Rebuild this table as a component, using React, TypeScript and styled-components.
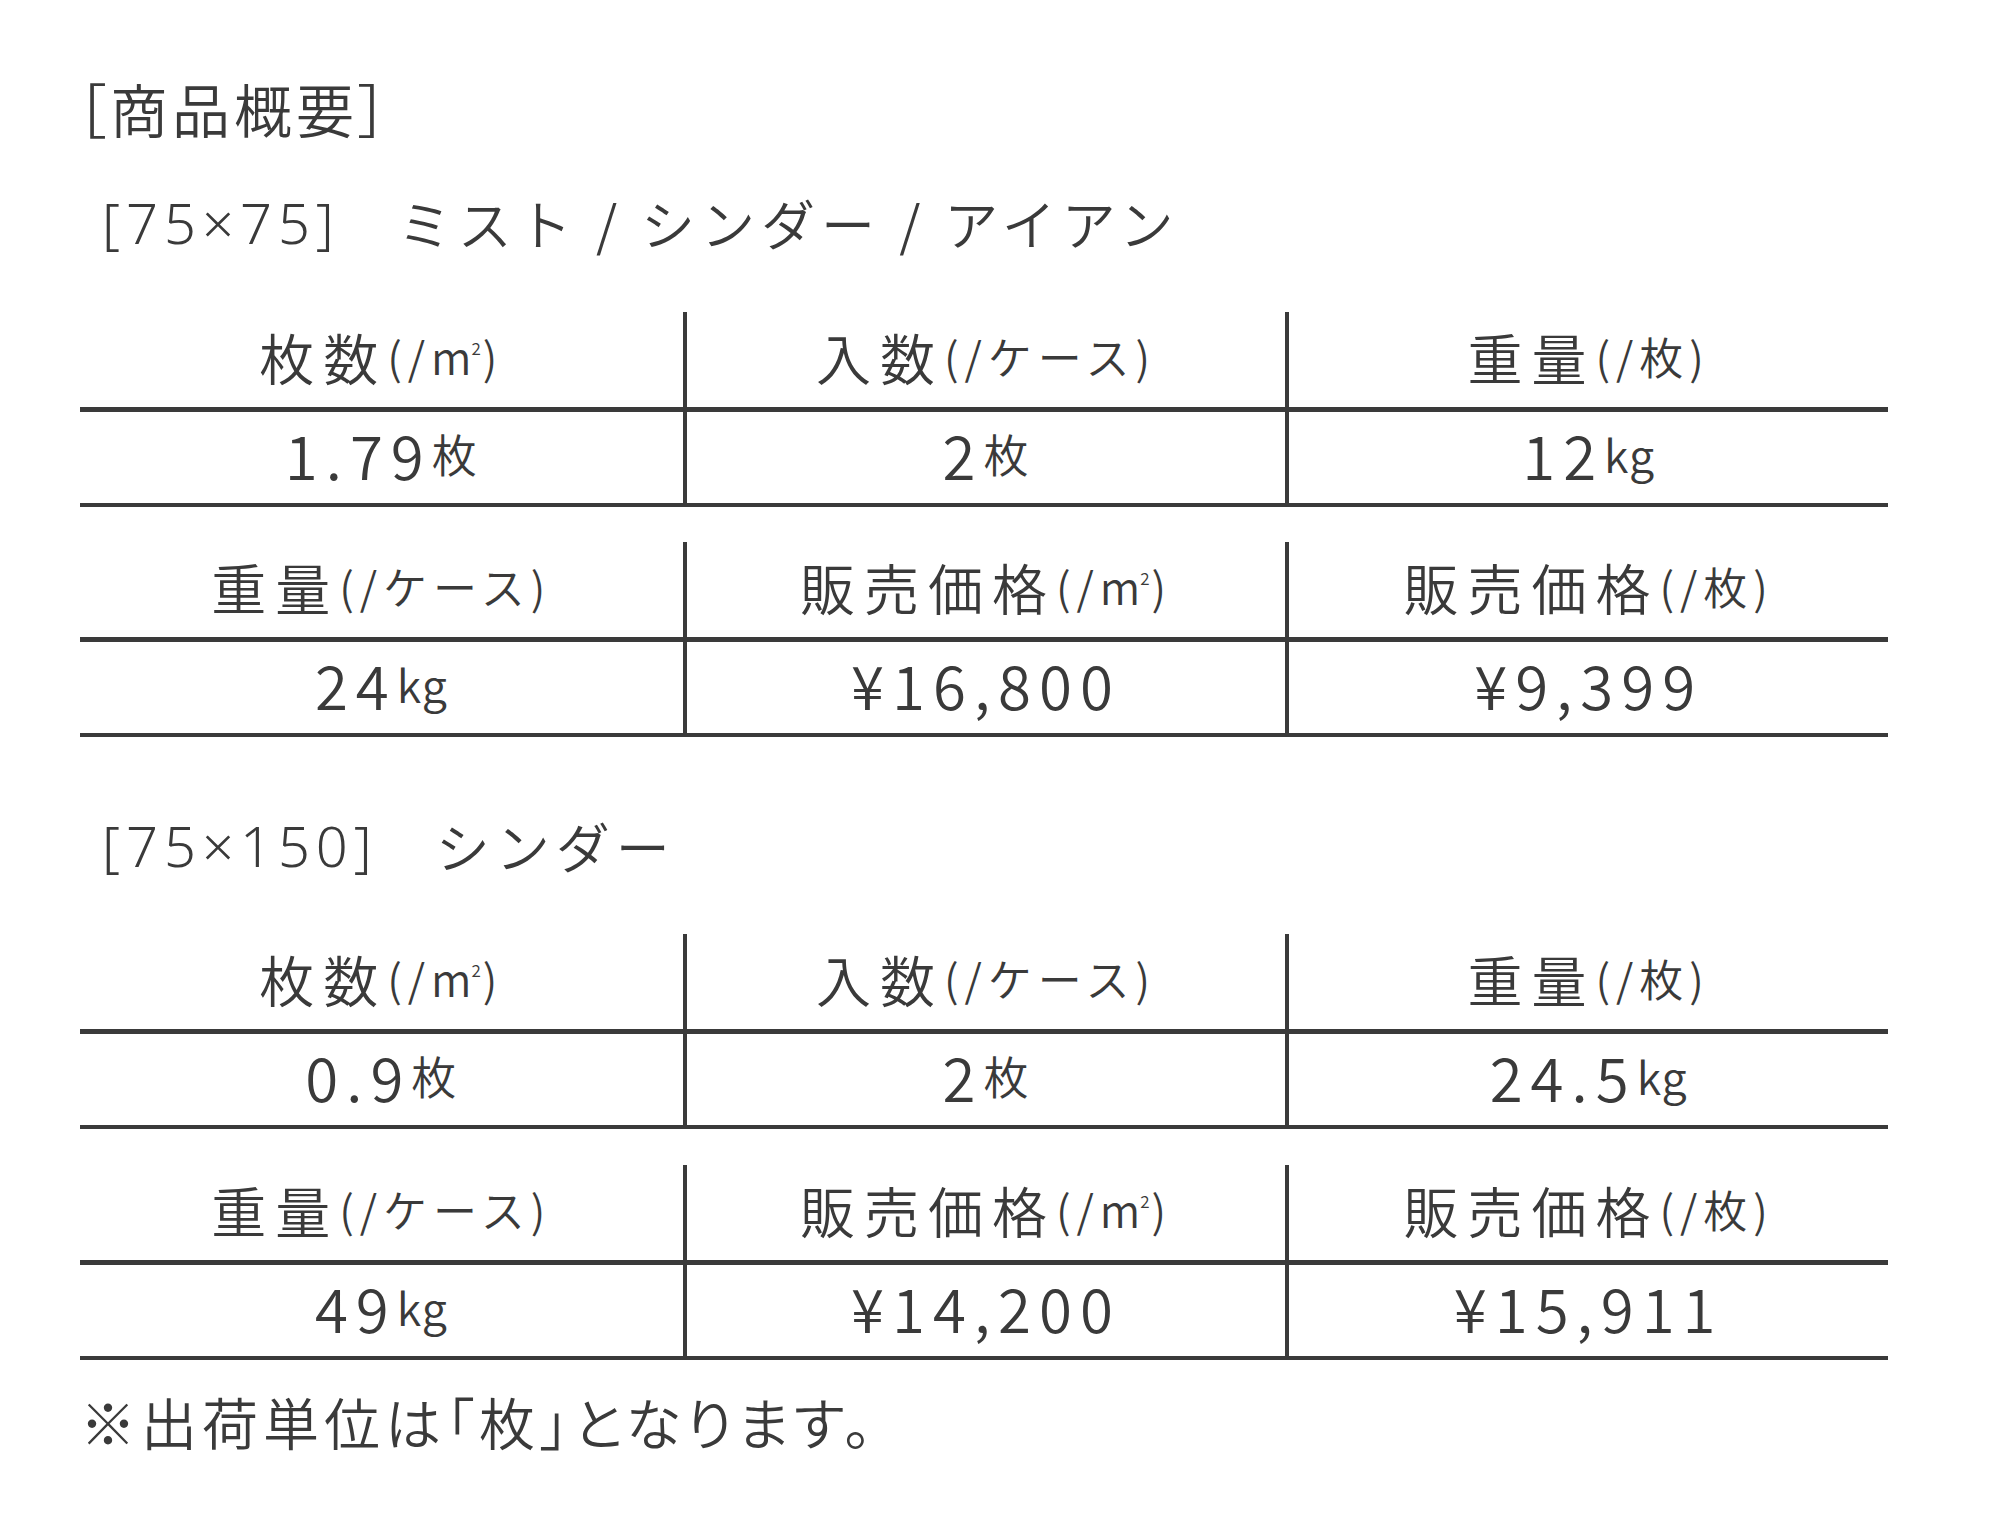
import styled, { createGlobalStyle } from 'styled-components'

const GlobalStyle = createGlobalStyle`
  html, body {
    margin: 0;
    padding: 0;
    background: #ffffff;
  }
  body {
    font-family: "Noto Sans CJK JP", "Noto Sans", sans-serif;
    color: #3a3a3a;
  }
`

const Page = styled.div`
  width: 1999px;
  min-height: 1537px;
  box-sizing: border-box;
  padding: 73px 0 0 80px;
  display: flex;
  flex-direction: column;
`

const Title = styled.h1`
  margin: 0 0 0 -3px;
  height: 70px;
  display: flex;
  align-items: center;
  font-size: 58px;
  font-weight: 350;
  letter-spacing: 4px;
  font-feature-settings: "palt";
`

const SectionTitle = styled.h2<{ $top: number }>`
  margin: ${(p) => p.$top}px 0 0;
  height: 70px;
  display: flex;
  align-items: center;
  padding-left: 22px;
  font-size: 54px;
  font-weight: 350;
  letter-spacing: 6px;
`

const Size = styled.span`
  font-family: "Noto Sans", sans-serif;
  font-size: 56px;
  letter-spacing: 6px;
  margin-right: 58px;
`

const Block = styled.div<{ $top: number }>`
  margin-top: ${(p) => p.$top}px;
  width: 1808px;
  display: grid;
  grid-template-columns: repeat(3, 1fr);
  grid-template-rows: 100px 95px;
`

const HeadCell = styled.div<{ $divider: boolean }>`
  display: flex;
  align-items: center;
  justify-content: center;
  box-sizing: border-box;
  padding-bottom: 8px;
  border-bottom: 5px solid #3a3a3a;
  border-left: ${(p) => (p.$divider ? '4px solid #3a3a3a' : 'none')};
  font-size: 55px;
  font-weight: 350;
  letter-spacing: 9px;
`

const DataCell = styled.div<{ $divider: boolean }>`
  display: flex;
  align-items: center;
  justify-content: center;
  box-sizing: border-box;
  padding-bottom: 8px;
  border-bottom: 4px solid #3a3a3a;
  border-left: ${(p) => (p.$divider ? '4px solid #3a3a3a' : 'none')};
  font-weight: 350;
`

const Unit = styled.span`
  font-size: 44px;
  letter-spacing: 6px;
`

const Sup = styled.sup`
  font-size: 17px;
  line-height: 0;
  vertical-align: 20px;
  margin-left: -6px;
  margin-right: 2px;
  letter-spacing: 0;
`

const Value = styled.span`
  font-size: 60px;
  letter-spacing: 8px;
`

const SmallUnit = styled.span`
  font-size: 45px;
  letter-spacing: 1px;
`

const Note = styled.p`
  margin: 25px 0 0;
  height: 70px;
  display: flex;
  align-items: center;
  font-size: 56px;
  font-weight: 350;
  letter-spacing: 5px;
  font-feature-settings: "palt";
`

type Head = { label: string; unit: React.ReactNode }
type Data = { value: string; unit?: string }

const sqm = (
  <>
    (/m<Sup>2</Sup>)
  </>
)

const TableBlock = ({ top, heads, data }: { top: number; heads: Head[]; data: Data[] }) => (
  <Block $top={top}>
    {heads.map((h, i) => (
      <HeadCell key={'h' + i} $divider={i > 0}>
        {h.label}
        <Unit>{h.unit}</Unit>
      </HeadCell>
    ))}
    {data.map((d, i) => (
      <DataCell key={'d' + i} $divider={i > 0}>
        <Value>{d.value}</Value>
        {d.unit && <SmallUnit>{d.unit}</SmallUnit>}
      </DataCell>
    ))}
  </Block>
)

const headsA: Head[] = [
  { label: '枚数', unit: sqm },
  { label: '入数', unit: '(/ケース)' },
  { label: '重量', unit: '(/枚)' },
]

const headsB: Head[] = [
  { label: '重量', unit: '(/ケース)' },
  { label: '販売価格', unit: sqm },
  { label: '販売価格', unit: '(/枚)' },
]

export default function App() {
  return (
    <>
      <GlobalStyle />
      <Page>
        <Title>［商品概要］</Title>

        <SectionTitle $top={44}>
          <Size>[75×75]</Size>ミスト / シンダー / アイアン
        </SectionTitle>
        <TableBlock
          top={55}
          heads={headsA}
          data={[
            { value: '1.79', unit: '枚' },
            { value: '2', unit: '枚' },
            { value: '12', unit: 'kg' },
          ]}
        />
        <TableBlock
          top={35}
          heads={headsB}
          data={[{ value: '24', unit: 'kg' }, { value: '¥16,800' }, { value: '¥9,399' }]}
        />

        <SectionTitle $top={73}>
          <Size>[75×150]</Size>シンダー
        </SectionTitle>
        <TableBlock
          top={54}
          heads={headsA}
          data={[
            { value: '0.9', unit: '枚' },
            { value: '2', unit: '枚' },
            { value: '24.5', unit: 'kg' },
          ]}
        />
        <TableBlock
          top={36}
          heads={headsB}
          data={[{ value: '49', unit: 'kg' }, { value: '¥14,200' }, { value: '¥15,911' }]}
        />

        <Note>※出荷単位は「枚」となります。</Note>
      </Page>
    </>
  )
}
